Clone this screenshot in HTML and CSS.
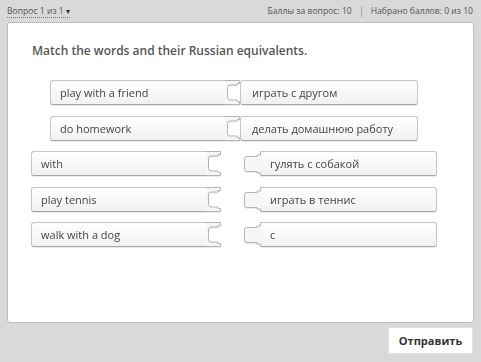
FILE: index.html
```html
<!DOCTYPE html>
<html lang="ru">
<head>
  <meta charset="UTF-8">
  <title>Вопрос 1 из 1</title>
  <link rel="stylesheet" href="styles.css">
</head>
<body>

  <div class="topbar">
    <span class="question-menu">Вопрос 1 из 1 <span class="caret">&#9662;</span></span>
    <div class="scores">
      <span>Баллы за вопрос: 10</span>
      <span class="sep"></span>
      <span>Набрано баллов: 0 из 10</span>
    </div>
  </div>

  <div class="panel">
    <h2 class="title">Match the words and their Russian equivalents.</h2>

    <div class="pairs">
      <!-- matched pairs -->
      <div class="row row-matched">
        <div class="piece piece-left">
          <div class="piece-body">play with a friend</div>
          <svg class="socket" width="15" height="25" viewBox="0 0 15 25">
            <path class="fill" d="M0 0.5 H14.5 V3.5 H12 V5 H5 Q2.5 5 2.5 7.5 V17.5 Q2.5 20 5 20 H12 V21.5 H14.5 V24.5 H0 Z"/>
            <path class="line" d="M0 0.5 H14.5 V3.5 H12 V5 H5 Q2.5 5 2.5 7.5 V17.5 Q2.5 20 5 20 H12 V21.5 H14.5 V24.5 H0"/>
          </svg>
        </div>
        <div class="piece piece-right">
          <div class="piece-body">играть с другом</div>
        </div>
      </div>

      <div class="row row-matched">
        <div class="piece piece-left">
          <div class="piece-body">do homework</div>
          <svg class="socket" width="15" height="25" viewBox="0 0 15 25">
            <path class="fill" d="M0 0.5 H14.5 V3.5 H12 V5 H5 Q2.5 5 2.5 7.5 V17.5 Q2.5 20 5 20 H12 V21.5 H14.5 V24.5 H0 Z"/>
            <path class="line" d="M0 0.5 H14.5 V3.5 H12 V5 H5 Q2.5 5 2.5 7.5 V17.5 Q2.5 20 5 20 H12 V21.5 H14.5 V24.5 H0"/>
          </svg>
        </div>
        <div class="piece piece-right">
          <div class="piece-body">делать домашнюю работу</div>
        </div>
      </div>

      <!-- open pairs -->
      <div class="row row-open">
        <div class="piece piece-left">
          <div class="piece-body">with</div>
          <svg class="socket" width="15" height="25" viewBox="0 0 15 25">
            <path class="fill" d="M0 0.5 H14.5 V3.5 H12 V5 H5 Q2.5 5 2.5 7.5 V17.5 Q2.5 20 5 20 H12 V21.5 H14.5 V24.5 H0 Z"/>
            <path class="line" d="M0 0.5 H14.5 V3.5 H12 V5 H5 Q2.5 5 2.5 7.5 V17.5 Q2.5 20 5 20 H12 V21.5 H14.5 V24.5 H0"/>
          </svg>
        </div>
        <div class="piece piece-knob">
          <svg class="knob" width="18" height="25" viewBox="0 0 18 25">
            <path class="fill" d="M18 0.5 H17.5 V4 H14 V5.5 H4 Q1.5 5.5 1.5 8 V18 Q1.5 20.5 4 20.5 H14 V22 H17.5 V24.5 H18 Z"/>
            <path class="line" d="M18 0.5 H17.5 V4 H14 V5.5 H4 Q1.5 5.5 1.5 8 V18 Q1.5 20.5 4 20.5 H14 V22 H17.5 V24.5 H18"/>
          </svg>
          <div class="piece-body">гулять с собакой</div>
        </div>
      </div>

      <div class="row row-open">
        <div class="piece piece-left">
          <div class="piece-body">play tennis</div>
          <svg class="socket" width="15" height="25" viewBox="0 0 15 25">
            <path class="fill" d="M0 0.5 H14.5 V3.5 H12 V5 H5 Q2.5 5 2.5 7.5 V17.5 Q2.5 20 5 20 H12 V21.5 H14.5 V24.5 H0 Z"/>
            <path class="line" d="M0 0.5 H14.5 V3.5 H12 V5 H5 Q2.5 5 2.5 7.5 V17.5 Q2.5 20 5 20 H12 V21.5 H14.5 V24.5 H0"/>
          </svg>
        </div>
        <div class="piece piece-knob">
          <svg class="knob" width="18" height="25" viewBox="0 0 18 25">
            <path class="fill" d="M18 0.5 H17.5 V4 H14 V5.5 H4 Q1.5 5.5 1.5 8 V18 Q1.5 20.5 4 20.5 H14 V22 H17.5 V24.5 H18 Z"/>
            <path class="line" d="M18 0.5 H17.5 V4 H14 V5.5 H4 Q1.5 5.5 1.5 8 V18 Q1.5 20.5 4 20.5 H14 V22 H17.5 V24.5 H18"/>
          </svg>
          <div class="piece-body">играть в теннис</div>
        </div>
      </div>

      <div class="row row-open">
        <div class="piece piece-left">
          <div class="piece-body">walk with a dog</div>
          <svg class="socket" width="15" height="25" viewBox="0 0 15 25">
            <path class="fill" d="M0 0.5 H14.5 V3.5 H12 V5 H5 Q2.5 5 2.5 7.5 V17.5 Q2.5 20 5 20 H12 V21.5 H14.5 V24.5 H0 Z"/>
            <path class="line" d="M0 0.5 H14.5 V3.5 H12 V5 H5 Q2.5 5 2.5 7.5 V17.5 Q2.5 20 5 20 H12 V21.5 H14.5 V24.5 H0"/>
          </svg>
        </div>
        <div class="piece piece-knob">
          <svg class="knob" width="18" height="25" viewBox="0 0 18 25">
            <path class="fill" d="M18 0.5 H17.5 V4 H14 V5.5 H4 Q1.5 5.5 1.5 8 V18 Q1.5 20.5 4 20.5 H14 V22 H17.5 V24.5 H18 Z"/>
            <path class="line" d="M18 0.5 H17.5 V4 H14 V5.5 H4 Q1.5 5.5 1.5 8 V18 Q1.5 20.5 4 20.5 H14 V22 H17.5 V24.5 H18"/>
          </svg>
          <div class="piece-body">с</div>
        </div>
      </div>
    </div>
  </div>

  <div class="footer">
    <button class="submit">Отправить</button>
  </div>

</body>
</html>
```

FILE: styles.css
```css
body {
  margin: 0;
  width: 481px;
  height: 362px;
  background-color: #d9d9d9;
  font-family: "Open Sans", Arial, sans-serif;
  color: #444;
  overflow: hidden;
}
.topbar {
  height: 22px;
  padding: 0 8px 0 7px;
  display: flex;
  justify-content: space-between;
  align-items: center;
  font-size: 8.6px;
  color: #555;
}
.question-menu {
  border-bottom: 1px dotted #777;
  line-height: 11px;
}
.caret {
  font-size: 8px;
  color: #333;
}
.scores {
  display: flex;
  align-items: center;
}
.scores .sep {
  width: 1px;
  height: 11px;
  background: #aaa;
  margin: 0 9px;
}
.panel {
  margin: 0 7px;
  height: 299px;
  background: #fff;
  border: 1px solid #bdbdbd;
  border-radius: 3px;
}
.title {
  margin: 0;
  padding: 14px 0 0 24px;
  font-size: 12px;
  font-weight: 600;
  color: #555;
  line-height: 28px;
}
.pairs {
  margin-top: 15px;
  display: flex;
  flex-direction: column;
  gap: 10.5px;
}
.row {
  display: flex;
  height: 25px;
}
.row-matched {
  margin-left: 42px;
}
.row-open {
  margin-left: 23px;
}
.piece {
  display: flex;
  height: 25px;
  font-size: 11px;
  color: #444;
  filter: drop-shadow(0 1px 0 rgba(0, 0, 0, 0.08));
}
.piece-body {
  flex: 1;
  box-sizing: border-box;
  height: 25px;
  line-height: 23px;
  padding-left: 9px;
  background: linear-gradient(#fff, #f1f1f1);
  border: 1px solid #c6c6c6;
  border-bottom-color: #a6a6a6;
  white-space: nowrap;
}
.piece-left {
  width: 190px;
}
.piece-left .piece-body {
  border-right: none;
  border-radius: 3px 0 0 3px;
}
.piece-right {
  width: 178px;
}
.piece-right .piece-body {
  border-radius: 3px;
  padding-left: 11px;
}
.piece-knob {
  width: 194px;
  margin-left: 22px;
}
.piece-knob .piece-body {
  border-left: none;
  border-radius: 0 3px 3px 0;
}
.socket .fill,
.knob .fill {
  fill: #f6f6f6;
}
.socket .line,
.knob .line {
  fill: none;
  stroke: #b3b3b3;
  stroke-width: 1;
}
.footer {
  display: flex;
  justify-content: flex-end;
  padding: 4px 8px 0 0;
}
.submit {
  width: 85px;
  height: 27px;
  border: 1px solid #e2e2e2;
  border-radius: 2px;
  background: #fff;
  font-family: "Open Sans", Arial, sans-serif;
  font-size: 11px;
  font-weight: bold;
  color: #333;
}
```
